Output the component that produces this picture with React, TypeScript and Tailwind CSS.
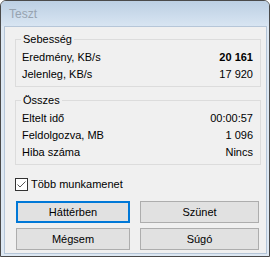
import React from 'react';

const font = { fontFamily: '"Liberation Sans", Arial, sans-serif' };

function Group({ title, rows, className }: { title: string; rows: [string, string, boolean?][]; className?: string }) {
  return (
    <div className={`relative border border-[#dcdcdc] pt-[9px] pb-[3px] pl-[6px] pr-[7px] ${className ?? ''}`}>
      <span className="absolute left-[5px] top-[-7px] bg-[#f0f0f0] px-[2px] leading-[13px]">{title}</span>
      {rows.map(([label, value, bold]) => (
        <div key={label} className="flex h-[17px] items-center justify-between leading-[17px]">
          <span>{label}</span>
          <span className={bold ? 'font-bold' : ''}>{value}</span>
        </div>
      ))}
    </div>
  );
}

function Button({ label, focused, className }: { label: string; focused?: boolean; className?: string }) {
  return (
    <button
      className={`h-[22px] bg-[#e1e1e1] text-[11px] text-black ${
        focused ? 'border-2 border-[#0078d7]' : 'border border-[#adadad]'
      } ${className ?? ''}`}
    >
      {label}
    </button>
  );
}

export default function App() {
  return (
    <div className="h-[259px] w-[273px] overflow-hidden bg-white" style={font}>
      <div className="flex h-[257px] w-[270px] flex-col rounded-t-[6px] border border-[#4a4a4a] bg-[#dde8f3]">
        {/* title bar */}
        <div className="flex h-[25px] items-center rounded-t-[5px] bg-gradient-to-b from-[#bccfe3] to-[#d8e5f2] pl-[8px]">
          <span className="text-[12px] text-[#97a3b0]">Teszt</span>
        </div>
        {/* client area */}
        <div className="ml-[3px] mr-[2px] mb-[2px] flex flex-1 flex-col border border-[#b6c6d8] bg-[#f0f0f0] pl-[10px] pr-[5px] pt-[12px] text-[11px] text-black">
          <Group
            title="Sebesség"
            rows={[
              ['Eredmény, KB/s', '20 161', true],
              ['Jelenleg, KB/s', '17 920'],
            ]}
          />
          <Group
            className="mt-[13px]"
            title="Összes"
            rows={[
              ['Eltelt idő', '00:00:57'],
              ['Feldolgozva, MB', '1 096'],
              ['Hiba száma', 'Nincs'],
            ]}
          />
          <label className="mt-[13px] flex h-[13px] items-center gap-[3px]">
            <span className="flex h-[13px] w-[13px] items-center justify-center border border-[#333333] bg-white">
              <svg width="11" height="11" viewBox="0 0 11 11">
                <path d="M1.5 5.5 L4 8 L9.5 2.5" fill="none" stroke="#555" strokeWidth="1" />
              </svg>
            </span>
            <span>Több munkamenet</span>
          </label>
          <div className="mt-[10px] grid grid-cols-[114px_119px] gap-x-[10px] gap-y-[5px] pl-[1px]">
            <Button label="Háttérben" focused />
            <Button label="Szünet" />
            <Button label="Mégsem" />
            <Button label="Súgó" />
          </div>
        </div>
      </div>
    </div>
  );
}
